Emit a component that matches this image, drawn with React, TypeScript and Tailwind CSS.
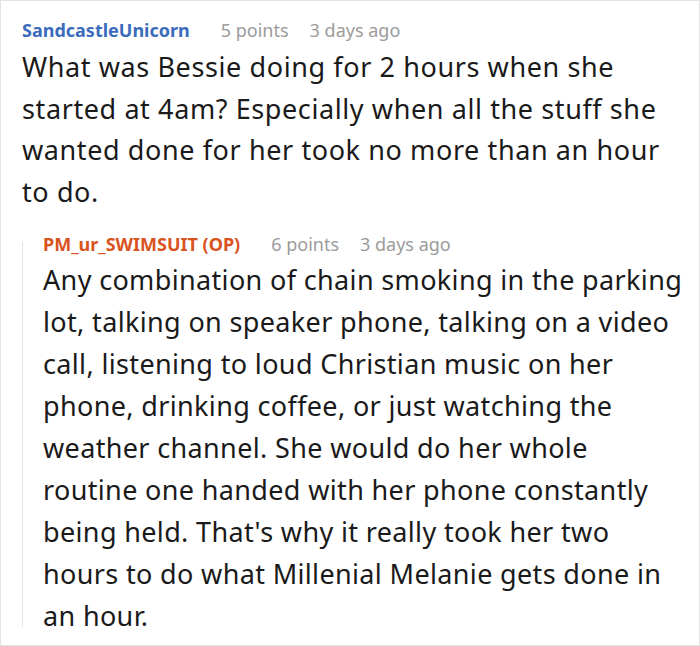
import React from 'react';

interface CommentProps {
  author: string;
  authorClass: string;
  points: string;
  age: string;
}

const CommentHeader: React.FC<CommentProps> = ({ author, authorClass, points, age }) => (
  <div className="flex items-baseline text-[18px] leading-[24px]">
    <span className={`font-bold ${authorClass}`}>{author}</span>
    <span className="ml-[31px] text-[#9b9b9b]">{points}</span>
    <span className="ml-[21px] text-[#9b9b9b]">{age}</span>
  </div>
);

const Lines: React.FC<{ lines: string[]; className: string }> = ({ lines, className }) => (
  <p className={`whitespace-nowrap text-[27px] ${className}`}>
    {lines.map((line, i) => (
      <React.Fragment key={i}>
        {i > 0 && <br />}
        {line}
      </React.Fragment>
    ))}
  </p>
);

const question = [
  'What was Bessie doing for 2 hours when she',
  'started at 4am? Especially when all the stuff she',
  'wanted done for her took no more than an hour',
  'to do.',
];

const answer = [
  'Any combination of chain smoking in the parking',
  'lot, talking on speaker phone, talking on a video',
  'call, listening to loud Christian music on her',
  'phone, drinking coffee, or just watching the',
  'weather channel. She would do her whole',
  'routine one handed with her phone constantly',
  "being held. That's why it really took her two",
  'hours to do what Millenial Melanie gets done in',
  'an hour.',
];

export default function App() {
  return (
    <div
      className="w-[700px] h-[646px] overflow-hidden border border-[#e3e3e3] bg-white pl-[21px] pt-[17px] text-[#1a1a1a]"
      style={{ fontFamily: '"Noto Sans", "Open Sans", sans-serif' }}
    >
      <CommentHeader
        author="SandcastleUnicorn"
        authorClass="text-[#3b6cbc]"
        points="5 points"
        age="3 days ago"
      />
      <Lines lines={question} className="mt-[4px] leading-[41.5px] tracking-[0.6px]" />

      <div className="mt-[20px] flex">
        <div className="mt-[10px] mb-[10px] w-px shrink-0 bg-[#e3e3e3]" />
        <div className="pl-[20px]">
          <CommentHeader
            author="PM_ur_SWIMSUIT (OP)"
            authorClass="text-[#d9531e]"
            points="6 points"
            age="3 days ago"
          />
          <Lines lines={answer} className="mt-[3px] leading-[42px] tracking-[0.35px]" />
        </div>
      </div>
    </div>
  );
}
